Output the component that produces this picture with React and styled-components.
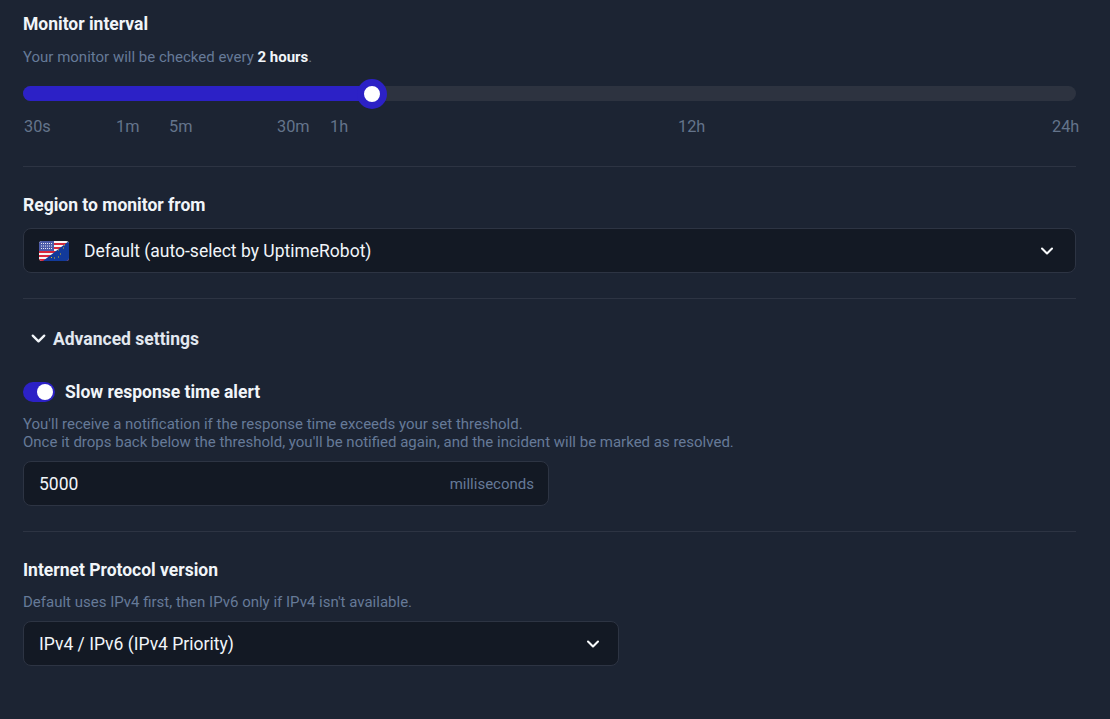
import styled, { createGlobalStyle } from 'styled-components';
import { ChevronDown } from 'lucide-react';

const GlobalStyle = createGlobalStyle`
    html, body {
        margin: 0;
        background: #1c2433;
        font-family: Roboto, "Liberation Sans", sans-serif;
        overflow: hidden;
    }
`;

const Page = styled.main`
    width: 1053px;
    height: 719px;
    padding: 14px 0 0 23px;
`;

const Title = styled.h3`
    margin: ${(p) => p.$margin || '0'};
    font-size: 17.5px;
    line-height: 20px;
    font-weight: 700;
    color: #f1f5f9;
`;

const Help = styled.p`
    margin: ${(p) => p.$margin || '0'};
    font-size: 15px;
    line-height: 18px;
    font-weight: 400;
    color: #667a98;

    strong {
        font-weight: 700;
        color: #f1f5f9;
    }
`;

const Divider = styled.hr`
    margin: ${(p) => p.$margin};
    border: 0;
    height: 1px;
    background: #2d3443;
`;

const Track = styled.div`
    position: relative;
    height: 15px;
    margin-top: 20px;
    border-radius: 8px;
    background: #2d3340;
`;

const Fill = styled.div`
    height: 100%;
    border-radius: 8px;
    background: #2c21c6;
`;

const Thumb = styled.div`
    position: absolute;
    top: 50%;
    width: 16px;
    height: 16px;
    border: 7px solid #2c21c6;
    border-radius: 50%;
    background: #fff;
    transform: translate(-50%, -50%);
`;

const Marks = styled.div`
    position: relative;
    height: 18px;
    margin-top: 17px;
`;

const Mark = styled.span`
    position: absolute;
    top: 0;
    left: ${(p) => p.$left}px;
    font-size: 16.3px;
    line-height: 18px;
    color: #64748b;
`;

const Select = styled.div`
    display: flex;
    align-items: center;
    box-sizing: border-box;
    width: ${(p) => p.$width}px;
    height: 45px;
    margin-top: ${(p) => p.$top}px;
    padding: 0 ${(p) => p.$right}px 0 15px;
    gap: 15px;
    border: 1px solid #2d3443;
    border-radius: 8px;
    background: #131924;
    color: #f1f5f9;
    font-size: 17.5px;
    line-height: 24px;
`;

const SelectText = styled.span`
    flex: 1;
`;

const Arrow = styled(ChevronDown)`
    width: 20px;
    height: 20px;
    color: #f8fafc;
    stroke-width: 2.5;
`;

const Advanced = styled.div`
    display: flex;
    align-items: center;
    gap: 3px;
    margin-left: 4px;
    font-size: 17.5px;
    line-height: 22px;
    font-weight: 700;
    color: #e2e8f0;

    svg {
        width: 23px;
        height: 23px;
        stroke-width: 2.4;
        color: #f1f5f9;
    }
`;

const AlertRow = styled.div`
    display: flex;
    align-items: center;
    gap: 10px;
    margin-top: 31px;
    font-size: 17.5px;
    line-height: 22px;
    font-weight: 700;
    color: #f1f5f9;
`;

const Switch = styled.span`
    display: flex;
    align-items: center;
    justify-content: flex-end;
    box-sizing: border-box;
    width: 32px;
    height: 20px;
    padding-right: 2px;
    border-radius: 10px;
    background: #2c21c6;

    &::after {
        content: '';
        width: 16px;
        height: 16px;
        border-radius: 50%;
        background: #fff;
    }
`;

const Input = styled.div`
    display: flex;
    align-items: center;
    justify-content: space-between;
    box-sizing: border-box;
    width: 526px;
    height: 45px;
    margin-top: 10px;
    padding: 0 14px 0 15px;
    border: 1px solid #2d3443;
    border-radius: 8px;
    background: #131924;
    color: #f1f5f9;
    font-size: 17.5px;
`;

const Unit = styled.span`
    font-size: 15px;
    color: #667a98;
`;

const marks = [
    ['30s', 1],
    ['1m', 93],
    ['5m', 146],
    ['30m', 254],
    ['1h', 307],
    ['12h', 655],
    ['24h', 1029],
];

function Flag() {
    return (
        <svg width="30" height="20" viewBox="0 0 30 20">
            <defs>
                <clipPath id="flag-shape">
                    <rect width="30" height="20" rx="3" />
                </clipPath>
            </defs>
            <g clipPath="url(#flag-shape)">
                <rect width="30" height="20" fill="#f5f5f5" />
                <path d="M0 2h30v2H0zM0 6h30v2H0zM0 10h30v2H0zM0 14h30v2H0zM0 18h30v2H0z" fill="#d8283c" />
                <rect width="15" height="10" fill="#4a5aa8" />
                <path d="M2 2.5h11M2 5h11M2 7.5h11" stroke="#e6e8f5" strokeWidth="1" strokeDasharray="1 1" />
                <path d="M30 0v20H4z" fill="#123a9a" />
                <path d="M12 16.5h1M15 17h1M19 16h1M21 13h1M19 9h1M24 7h1M25 4h1" stroke="#d6b928" strokeWidth="1" />
            </g>
        </svg>
    );
}

function App() {
    return (
        <Page>
            <GlobalStyle />
            <Title>Monitor interval</Title>
            <Help $margin="14px 0 0">
                Your monitor will be checked every <strong>2 hours</strong>.
            </Help>
            <Track>
                <Fill style={{ width: '349px' }} />
                <Thumb style={{ left: '349px' }} />
            </Track>
            <Marks>
                {marks.map(([label, left]) => (
                    <Mark key={label} $left={left}>{label}</Mark>
                ))}
            </Marks>
            <Divider $margin="30px 0 0" />

            <Title $margin="28px 0 0">Region to monitor from</Title>
            <Select $width={1053} $top={13} $right={18}>
                <Flag />
                <SelectText>Default (auto-select by UptimeRobot)</SelectText>
                <Arrow />
            </Select>
            <Divider $margin="25px 0 28px" />

            <Advanced>
                <ChevronDown />
                Advanced settings
            </Advanced>
            <AlertRow>
                <Switch />
                Slow response time alert
            </AlertRow>
            <Help $margin="12px 0 0">
                You'll receive a notification if the response time exceeds your set threshold.
                <br />
                Once it drops back below the threshold, you'll be notified again, and the incident will be marked as resolved.
            </Help>
            <Input>
                5000
                <Unit>milliseconds</Unit>
            </Input>
            <Divider $margin="25px 0 28px" />

            <Title>Internet Protocol version</Title>
            <Help $margin="13px 0 0">Default uses IPv4 first, then IPv6 only if IPv4 isn't available.</Help>
            <Select $width={596} $top={10} $right={15}>
                <SelectText>IPv4 / IPv6 (IPv4 Priority)</SelectText>
                <Arrow />
            </Select>
        </Page>
    );
}

export default App;
